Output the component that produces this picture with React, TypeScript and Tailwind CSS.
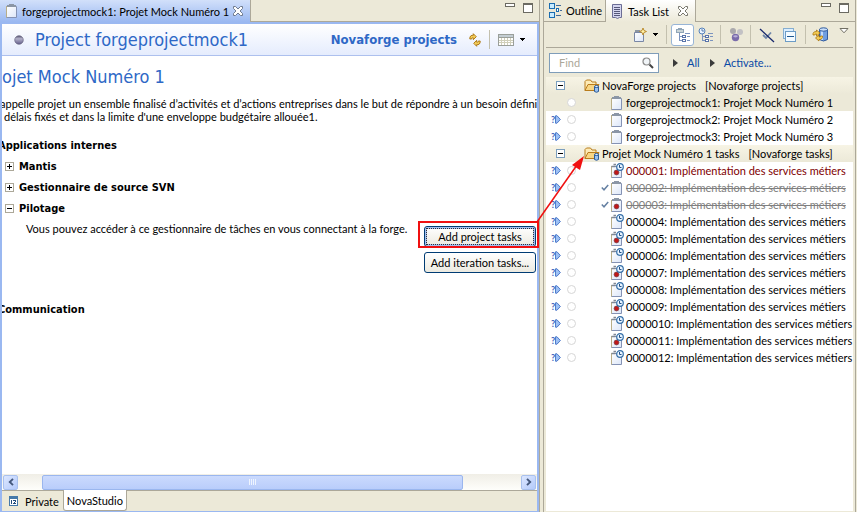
import type { ReactNode } from "react";

function Clipboard({ clock = false, bug = false }: { clock?: boolean; bug?: boolean }) {
  return (
    <svg width="14" height="16" viewBox="0 0 14 16" className="shrink-0" aria-hidden="true">
      <defs>
        <linearGradient id="paper" x1="0" y1="0" x2="1" y2="1">
          <stop offset="0" stopColor="#ffffff" />
          <stop offset="1" stopColor="#dce6f8" />
        </linearGradient>
      </defs>
      <path d="M1.500 3.500v11h10v-11z" fill="url(#paper)" stroke="#8492b4" />
      <path d="M1.500 3v11.500" stroke="#b9ae88" />
      {clock ? (
        <path d="M1.500 3.500h4M3.500 1.500h2.500" stroke="#7f8896" strokeWidth="1.400" />
      ) : (
        <path d="M2 2h9v2H2zM4 1h5v1H4z" fill="#8b96a6" />
      )}
      {bug && <circle cx="6.500" cy="9.500" r="2.400" fill="#c01818" stroke="#7d3c44" strokeWidth="0.800" />}
      {clock && (
        <>
          <circle cx="10" cy="4" r="3.300" fill="#e8f4ff" stroke="#356fa8" strokeWidth="1.200" />
          <path d="M9.500 2v2.500h2" fill="none" stroke="#224f86" />
        </>
      )}
    </svg>
  );
}

function Folder() {
  return (
    <svg width="16" height="14" viewBox="0 0 16 14" className="shrink-0" aria-hidden="true">
      <path d="M1 11.500v-9l1.500-1.500h4l1.500 2h4v2.500" fill="#fdebb6" stroke="#b97c1c" />
      <path d="M1 11.500l3-6h11l-3 6z" fill="#f8d684" stroke="#b97c1c" />
      <path d="M10.500 7.500v5q2 1.500 4 0v-5z" fill="#9bc2ee" stroke="#2d5b97" />
      <ellipse cx="12.500" cy="7.500" rx="2" ry="1" fill="#e1efff" stroke="#2d5b97" />
    </svg>
  );
}

function CloseMark({ stroke }: { stroke: string }) {
  return (
    <svg width="12" height="12" viewBox="0 0 12 12" aria-hidden="true">
      <path
        d="M1.500 1.500h2L6 4l2.500-2.500h2v2L8 6l2.500 2.500v2h-2L6 8l-2.500 2.500h-2v-2L4 6 1.500 3.500z"
        fill="#fff"
        stroke={stroke}
      />
    </svg>
  );
}

function WindowButtons() {
  return (
    <div className="ml-auto flex items-start gap-2 pt-[3px]">
      <button aria-label="Minimize" className="h-1 w-2.5 border border-[#6b6a62] bg-white" />
      <button aria-label="Maximize" className="h-2.5 w-2.5 border border-t-2 border-[#6b6a62] bg-white" />
    </div>
  );
}

function SyncArrows() {
  return (
    <svg width="12" height="14" viewBox="0 0 12 14" aria-hidden="true">
      <path d="M.8 6C.6 2.800 2.500 2 4.300 2.300V.7l3 3-3 3V4.900C3.200 4.500 2.600 5 2.700 6z" fill="#f3cb58" stroke="#a8730c" strokeWidth=".9" />
      <path d="M11.200 8c.2 3.200-1.700 4-3.500 3.700v1.600l-3-3 3-3v1.800c1.100.4 1.700-.1 1.600-1.100z" fill="#f3cb58" stroke="#a8730c" strokeWidth=".9" />
    </svg>
  );
}

function Caret() {
  return (
    <svg width="5" height="3" viewBox="0 0 5 3" shapeRendering="crispEdges" aria-hidden="true">
      <path d="M0 0h5v1H0zM1 1h3v1H1zM2 2h1v1H2z" />
    </svg>
  );
}

function Divider() {
  return <span className="h-[19px] w-px bg-[#c3c0ae]" />;
}

function Editor() {
  return (
    <main className="flex min-w-0 flex-1 flex-col border-r border-[#aca899] bg-[#ece9d8]">
      <div className="flex h-[22px]">
        <div className="flex w-[251px] items-center border-r border-[#aca899] bg-linear-to-b from-[#d2e0fa] to-[#9ab8f1] pl-[5px]">
          <Clipboard />
          <button className="ml-[3px] whitespace-nowrap">forgeprojectmock1: Projet Mock Numéro 1</button>
          <button aria-label="Close forgeprojectmock1" className="mr-1.5 ml-auto">
            <CloseMark stroke="#6f7b8f" />
          </button>
        </div>
        <div className="flex flex-1 border-b border-[#aca899] pr-1.5">
          <WindowButtons />
        </div>
      </div>
      <div className="flex flex-1 flex-col border-2 border-b-1 border-[#9ab8f1] bg-white">
        <header className="flex h-8 items-center border-b border-[#adc0ee] bg-linear-to-b from-white to-[#e5ecfd] pr-3">
          <svg width="10" height="10" viewBox="0 0 10 10" className="ml-3 shrink-0" aria-hidden="true">
            <defs>
              <linearGradient id="ball" x1="0" y1="0" x2="0" y2="1">
                <stop offset="0" stopColor="#55526e" />
                <stop offset=".35" stopColor="#b4b2ca" />
                <stop offset="1" stopColor="#625d8a" />
              </linearGradient>
            </defs>
            <circle cx="5" cy="5" r="4.300" fill="url(#ball)" stroke="#5b5874" strokeWidth=".6" />
          </svg>
          <h1 className="ml-[11px] font-['DejaVu_Sans_Condensed',sans-serif] text-[18px] whitespace-nowrap text-[#2e68c6]">Project forgeprojectmock1</h1>
          <a href="#projects" className="ml-auto font-['DejaVu_Sans_Condensed',sans-serif] text-[13px] font-bold whitespace-nowrap text-[#2e68c6]">
            Novaforge projects
          </a>
          <button aria-label="Synchronize" className="ml-3">
            <SyncArrows />
          </button>
          <span className="ml-2 h-[19px] w-px bg-[#c3c0ae]" />
          <button aria-label="Schedule" className="ml-2 flex items-center gap-1.5">
            <svg width="16" height="12" viewBox="0 0 16 12" shapeRendering="crispEdges" aria-hidden="true">
              <path d="M0 0h16v12H0z" fill="#9a9f9a" />
              <path d="M1 1h14v2H1z" fill="#c3cdd3" />
              <path d="M1 4h14v7H1z" fill="#d0cfba" />
              <path d="M1 4h2v2H1zM4 4h2v2H4zM7 4h2v2H7zM10 4h2v2h-2zM13 4h2v2h-2zM1 7h2v1H1zM4 7h2v1H4zM7 7h2v1H7zM10 7h2v1h-2zM13 7h2v1h-2zM1 9h2v2H1zM4 9h2v2H4zM7 9h2v2H7zM10 9h2v2h-2zM13 9h2v2h-2z" fill="#fff" />
            </svg>
            <Caret />
          </button>
        </header>
        <div className="-mr-0.5 flex flex-1 flex-col overflow-hidden pr-0.5">
          <h2 className="mt-[9px] font-['DejaVu_Sans_Condensed',sans-serif] text-[18px] leading-6 whitespace-nowrap text-[#2e68c6]">ojet Mock Numéro 1</h2>
          <p className="-ml-0.5 mt-2 leading-[13px] whitespace-nowrap">
            appelle projet un ensemble finalisé d’activités et d’actions entreprises dans le but de répondre à un besoin défini
            <br />
            <span className="ml-1">délais fixés et dans la limite d'une enveloppe budgétaire allouée1.</span>
          </p>
          <h3 className="-ml-1 mt-3 h-[21px] font-['DejaVu_Sans_Condensed',sans-serif] leading-[21px] font-bold">Applications internes</h3>
          <Section open={false}>Mantis</Section>
          <Section open={false}>Gestionnaire de source SVN</Section>
          <Section open>Pilotage</Section>
          <div className="flex items-start pr-px pl-6">
            <p className="leading-[19px] whitespace-nowrap">
              Vous pouvez accéder à ce gestionnaire de tâches en vous connectant à la forge.
            </p>
            <div className="mt-[7px] ml-auto flex w-28 shrink-0 flex-col gap-[5px]">
              <div className="relative">
                <button className="h-[21px] w-full rounded-[3px] border border-[#003c74] bg-linear-to-b from-white to-[#eceae0] p-px whitespace-nowrap shadow-[inset_0_0_0_2px_#a5c0ef]">
                  <span className="block border border-dotted border-[#333] leading-[15px]">Add project tasks</span>
                </button>
                <span className="absolute -top-[5px] -right-[3px] -left-1.5 h-[27px] border-2 border-[#f01010]" />
              </div>
              <button className="h-[21px] w-full rounded-[3px] border border-[#003c74] bg-linear-to-b from-white to-[#eceae0] leading-[17px] whitespace-nowrap">
                Add iteration tasks...
              </button>
            </div>
          </div>
          <h3 className="-ml-1 mt-[26px] h-[21px] font-['DejaVu_Sans_Condensed',sans-serif] leading-[21px] font-bold">Communication</h3>
        </div>
        <ScrollBar />
        <nav className="flex h-[21px] border-t border-[#aca899] bg-[#ece9d8] pl-[7px]">
          <button className="flex items-center">
            <svg width="9" height="10" viewBox="0 0 9 10" shapeRendering="crispEdges" aria-hidden="true">
              <path d="M0 0h9v10H0z" fill="#4579a9" />
              <path d="M1 3h7v6H1z" fill="#fff" />
              <path d="M2 4h1v4H2zM4 4h3v1H4zM6 5h1v1H6zM5 6h1v1H5zM4 7h3v1H4z" fill="#214c7c" />
            </svg>
            <span className="ml-[7px]">Private</span>
          </button>
          <button className="-mt-px ml-1 h-[21px] rounded-b-[3px] border border-t-0 border-[#aca899] bg-white px-[3px]">
            NovaStudio
          </button>
        </nav>
      </div>
    </main>
  );
}

function Section({ open, children }: { open: boolean; children: ReactNode }) {
  return (
    <button aria-expanded={open} className="flex h-[21px] items-center pl-[3px] text-left font-['DejaVu_Sans_Condensed',sans-serif] font-bold">
      <svg width="9" height="9" viewBox="0 0 9 9" shapeRendering="crispEdges" aria-hidden="true">
        <path d="M0 0h9v9H0z" fill="#aca899" />
        <path d="M1 1h7v7H1z" fill="#fff" />
        <path d="M2 4h5v1H2z" />
        {!open && <path d="M4 2h1v5H4z" />}
      </svg>
      <span className="ml-[5px]">{children}</span>
    </button>
  );
}

function ScrollBar() {
  return (
    <div className="flex h-4 items-center bg-linear-to-b from-[#f0eee6] to-[#fefefb] px-px">
      <button aria-label="Scroll left" className="flex h-[15px] w-[15px] items-center justify-center rounded-[2px] border border-[#a9c1ee] bg-linear-to-br from-[#dce7ff] to-[#b4cafb]">
        <svg width="6" height="8" viewBox="0 0 6 8"><path d="M5 .8L1.800 4 5 7.200" fill="none" stroke="#44587c" strokeWidth="1.900" /></svg>
      </button>
      <div className="ml-6 flex h-[15px] flex-1 items-center justify-center gap-px rounded-[2px] border border-[#9ab6ee] bg-linear-to-b from-[#cbdafd] to-[#b9cdfb]">
        <span className="h-1.5 w-px bg-[#eef4fe]" />
        <span className="h-1.5 w-px bg-[#eef4fe]" />
        <span className="h-1.5 w-px bg-[#eef4fe]" />
        <span className="h-1.5 w-px bg-[#eef4fe]" />
      </div>
      <button aria-label="Scroll right" className="ml-[58px] flex h-[15px] w-[15px] items-center justify-center rounded-[2px] border border-[#a9c1ee] bg-linear-to-br from-[#dce7ff] to-[#b4cafb]">
        <svg width="6" height="8" viewBox="0 0 6 8"><path d="M1 .8L4.200 4 1 7.200" fill="none" stroke="#44587c" strokeWidth="1.900" /></svg>
      </button>
    </div>
  );
}

function CategoryRow({ name, source }: { name: string; source: string }) {
  return (
    <li className="flex h-[17px] items-center bg-linear-to-b from-[#f7f4e5] to-[#ece9d8] pl-2.5 whitespace-nowrap">
      <button aria-label="Collapse" className="flex h-[9px] w-[9px] items-center justify-center border border-[#7b9ebd] bg-white">
        <span className="h-px w-[5px] bg-black" />
      </button>
      <span className="ml-[19px]">
        <Folder />
      </span>
      <span className="ml-0.5 leading-[15px]">{name}</span>
      <span className="ml-[9px] leading-[15px]">[{source}]</span>
    </li>
  );
}

type Task = { name: string; kind?: "late" | "done" | "selected"; clock?: boolean; bug?: boolean };

function TaskRow({ name, kind, clock, bug }: Task) {
  const text = kind === "late" ? "text-[#800000]" : kind === "done" ? "text-[#808080] line-through" : "";
  return (
    <li className={`flex h-[17px] items-center pl-[5px] whitespace-nowrap ${kind === "selected" ? "bg-[#ece9d8]" : ""}`}>
      <span className="flex w-[11px] shrink-0 items-center">
        {kind !== "selected" && (
          <>
            <b className="text-[9px] leading-none text-[#3c62b8]">?</b>
            <svg width="6" height="9" viewBox="0 0 6 9" className="shrink-0" aria-hidden="true">
              <path d="M.5 .8h1.500L5.400 4.500 2 8.200H.5z" fill="#9cc0f4" stroke="#4470c4" strokeWidth=".9" />
            </svg>
          </>
        )}
      </span>
      <span className="ml-[5px] h-[9px] w-[9px] shrink-0 rounded-full border border-[#d6d6d6] bg-white" />
      <span className="ml-6 flex w-2.5 shrink-0 justify-center">
        {kind === "done" && (
          <svg width="8" height="7" viewBox="0 0 8 7"><path d="M.8 3.500L3 5.800 7.200 1" fill="none" stroke="#6580a2" strokeWidth="1.500" /></svg>
        )}
      </span>
      <Clipboard clock={clock} bug={bug} />
      <span className={`ml-0.5 ${text}`}>{name}</span>
    </li>
  );
}

const projects: Task[] = [
  { name: "forgeprojectmock1: Projet Mock Numéro 1", kind: "selected" },
  { name: "forgeprojectmock2: Projet Mock Numéro 2" },
  { name: "forgeprojectmock3: Projet Mock Numéro 3" },
];

const tasks: Task[] = [
  { name: "000001: Implémentation des services métiers", kind: "late", clock: true, bug: true },
  { name: "000002: Implémentation des services métiers", kind: "done" },
  { name: "000003: Implémentation des services métiers", kind: "done", bug: true },
  { name: "000004: Implémentation des services métiers", clock: true },
  { name: "000005: Implémentation des services métiers", clock: true, bug: true },
  { name: "000006: Implémentation des services métiers", clock: true },
  { name: "000007: Implémentation des services métiers", clock: true, bug: true },
  { name: "000008: Implémentation des services métiers", clock: true },
  { name: "000009: Implémentation des services métiers", clock: true, bug: true },
  { name: "0000010: Implémentation des services métiers", clock: true },
  { name: "0000011: Implémentation des services métiers", clock: true, bug: true },
  { name: "0000012: Implémentation des services métiers", clock: true },
];

function Arrowhead() {
  return (
    <svg width="5" height="8" viewBox="0 0 5 8" aria-hidden="true">
      <path d="M0 0l5 4-5 4z" fill="#3a3a3a" />
    </svg>
  );
}

function TreeGlyph({ clock = false }: { clock?: boolean }) {
  return (
    <svg width="16" height="16" viewBox="0 0 16 16" shapeRendering="crispEdges" aria-hidden="true">
      <path d="M4 6h1v8H4zM5 9h3v1H5zM5 13h3v1H5zM10 6h5v1h-5zM12 9h3v1h-3zM12 13h3v1h-3z" fill="#7b94bf" />
      <path d="M7 8h4v3H7zM7 12h4v3H7z" fill="#5873a8" />
      <path d="M8 9h2v1H8zM8 13h2v1H8z" fill="#fff" />
      {clock ? (
        <g shapeRendering="auto">
          <circle cx="4" cy="4" r="3" fill="#e8f3ff" stroke="#5580b8" />
          <path d="M4 2v2h2" fill="none" stroke="#3a639c" strokeWidth=".8" />
        </g>
      ) : (
        <path d="M1 2h8v4H1zM3 1h4v1H3z" fill="#8fa5b8" />
      )}
      {!clock && <path d="M2 3h6v2H2z" fill="#c9d4d8" />}
    </svg>
  );
}

function TaskList() {
  return (
    <aside className="relative flex w-[317px] shrink-0 flex-col bg-[#ece9d8] pr-px pl-[3px]">
      <div className="flex flex-1 flex-col border-x border-[#aca899]">
        <div className="flex h-[22px]">
          <button className="flex w-[62px] items-center gap-1 border-r border-b border-[#aca899] pl-[5px]">
            <svg width="13" height="15" viewBox="0 0 13 15" shapeRendering="crispEdges" className="shrink-0" aria-hidden="true">
              <path d="M0 0h6v6H0zM0 9h6v6H0zM7 5h3v4H7z" fill="#1b6db0" />
              <path d="M1 1h4v4H1zM1 10h4v4H1z" fill="#c9ecff" />
              <path d="M8 6h1v2H8z" fill="#fff" />
              <path d="M7 2h5v1H7zM11 7h2v1h-2zM7 12h5v1H7z" fill="#416b9b" />
            </svg>
            Outline
          </button>
          <div className="flex w-[90px] items-center border-r border-[#aca899] bg-linear-to-b from-white to-[#ece9d8] pl-[5px]">
            <button className="flex items-center gap-[5px] whitespace-nowrap">
              <svg width="12" height="15" viewBox="0 0 12 15" className="shrink-0" aria-hidden="true">
                <path d="M1.500.500h9v13h-2l-2 1-2-1h-3z" fill="#d4d5ef" stroke="#6b6d95" />
                <path d="M3 3.500h6M3 5.500h6M3 7.500h6M3 9.500h6M3 11.500h6" stroke="#555779" />
              </svg>
              Task List
            </button>
            <button aria-label="Close Task List" className="mr-1.5 ml-auto">
              <CloseMark stroke="#77766c" />
            </button>
          </div>
          <div className="flex flex-1 border-b border-[#aca899] pr-1.5">
            <WindowButtons />
          </div>
        </div>
        <div className="mr-0.5 ml-0.5 flex h-[26px] items-center justify-end gap-1 border-b border-[#aca899] pr-1">
          <button aria-label="New task" className="mr-1 flex items-center gap-1.5">
            <svg width="14" height="16" viewBox="0 0 14 16" aria-hidden="true">
              <path d="M1.500 5.500h9v9h-9z" fill="url(#paper)" stroke="#7987a5" />
              <path d="M2 4h5" stroke="#8b95a2" strokeWidth="2" />
              <path d="M10 1l1 2.500 2.500 1-2.500 1-1 2.500-1-2.500-2.500-1 2.500-1z" fill="#fff3aa" stroke="#b78322" strokeWidth=".9" />
            </svg>
            <Caret />
          </button>
          <Divider />
          <button aria-label="Categorized" aria-pressed="true" className="flex h-[22px] w-[23px] items-center justify-center rounded-[3px] border border-[#98b5d6] bg-white">
            <TreeGlyph />
          </button>
          <button aria-label="Scheduled" className="mr-0.5">
            <TreeGlyph clock />
          </button>
          <Divider />
          <button aria-label="Focus on workweek" className="mr-0.5 ml-1">
            <svg width="15" height="15" viewBox="0 0 15 15" aria-hidden="true">
              <circle cx="4" cy="4" r="3" fill="#aaa9ac" />
              <circle cx="11" cy="5" r="3" fill="#c2c1c4" />
              <circle cx="6.500" cy="10.500" r="3.700" fill="#7a6cab" />
              <ellipse cx="6.500" cy="9.300" rx="2.300" ry="1.100" fill="#b9b0d8" />
            </svg>
          </button>
          <Divider />
          <button aria-label="Hide completed" className="ml-1">
            <svg width="16" height="16" viewBox="0 0 16 16" aria-hidden="true">
              <path d="M4 8l3 3 5-5.500" fill="none" stroke="#6e86a9" strokeWidth="1.800" />
              <path d="M1 2l14 13" stroke="#16276b" strokeWidth="1.300" />
            </svg>
          </button>
          <button aria-label="Collapse all" className="mr-1 ml-1">
            <svg width="14" height="14" viewBox="0 0 14 14" shapeRendering="crispEdges" aria-hidden="true">
              <path d="M0 0h11v11H0z" fill="#86aed0" />
              <path d="M1 1h9v9H1z" fill="#dbeeff" />
              <path d="M2 3h11v11H2z" fill="#6c9cc6" />
              <path d="M3 4h9v9H3z" fill="#f4fbff" />
              <path d="M4 8h7v1H4z" fill="#1d5791" />
            </svg>
          </button>
          <Divider />
          <button aria-label="Synchronize changed" className="ml-0.5">
            <svg width="17" height="16" viewBox="0 0 17 16" aria-hidden="true">
              <path d="M7.500 2.500v10q4 3 8 0v-10z" fill="#719fe0" stroke="#315b9c" />
              <path d="M10 4v9" stroke="#c3dcfb" strokeWidth="2" />
              <ellipse cx="11.500" cy="2.500" rx="4" ry="1.700" fill="#c8defa" stroke="#315b9c" />
              <path d="M1 8Q.5 4.500 4.500 4.500V3l3.500 3-3.500 3V7Q3 6.800 2.800 8zM10.500 9q.5 3.500-3.500 3.500V14l-3.500-3L7 8v2q1.500.2 1.700-1z" fill="#f4cd55" stroke="#a8730c" strokeWidth=".8" />
            </svg>
          </button>
          <button aria-label="View menu" className="mb-2 ml-1.5">
            <svg width="10" height="6" viewBox="0 0 10 6"><path d="M1 .5h8L5 4.800z" fill="#fff" stroke="#716f64" /></svg>
          </button>
        </div>
        <div className="flex h-[29px] items-center pl-[5px] text-[#0a4aa6]">
          <div className="flex h-5 w-[110px] items-center border border-[#7f9db9] bg-white pr-1">
            <input aria-label="Find" placeholder="Find" className="w-0 flex-1 bg-transparent pl-[9px] outline-none placeholder:text-[#aca899] placeholder:opacity-100" />
            <svg width="12" height="12" viewBox="0 0 12 12" aria-hidden="true">
              <circle cx="4.500" cy="4.500" r="3.500" fill="#f1f5f8" stroke="#8a8a8a" strokeWidth="1.200" />
              <path d="M7.500 7.500l3.500 3.500" stroke="#444" strokeWidth="2" />
            </svg>
          </div>
          <span className="ml-3.5 flex items-center gap-[9px]"><Arrowhead /><a href="#all">All</a></span>
          <span className="ml-2.5 flex items-center gap-[9px]"><Arrowhead /><a href="#activate">Activate...</a></span>
        </div>
        <ul className="mr-0.5 mb-px ml-0.5 flex-1 overflow-hidden bg-white">
          <CategoryRow name="NovaForge projects" source="Novaforge projects" />
          {projects.map((task) => <TaskRow key={task.name} {...task} />)}
          <CategoryRow name="Projet Mock Numéro 1 tasks" source="Novaforge tasks" />
          {tasks.map((task) => <TaskRow key={task.name} {...task} />)}
        </ul>
      </div>
      <svg width="50" height="70" viewBox="0 0 50 70" className="pointer-events-none absolute top-[156px] -left-1" aria-hidden="true">
        <path d="M1 66L41 9" stroke="#f01010" strokeWidth="1.500" />
        <path d="M48 0L44 14 36 9z" fill="#f01010" />
      </svg>
    </aside>
  );
}

export default function App() {
  return (
    <div className="flex min-h-screen bg-[#ece9d8] font-[Lato,sans-serif] text-[11px] leading-[17px] text-black">
      <Editor />
      <TaskList />
    </div>
  );
}
